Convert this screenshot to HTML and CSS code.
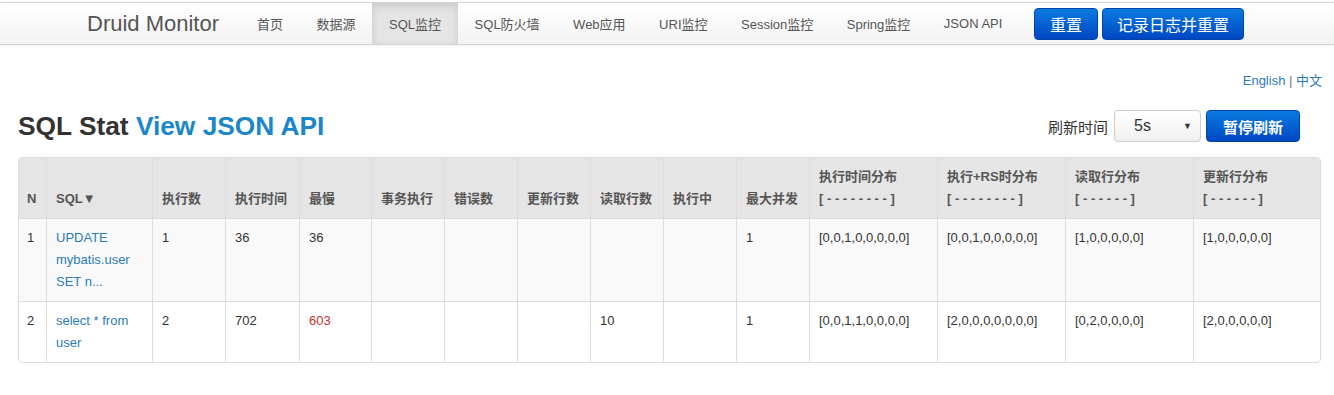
FILE: index.html
```html
<!DOCTYPE html>
<html lang="zh">

<head>
    <meta charset="UTF-8">
    <meta name="viewport" content="width=device-width, initial-scale=1.0">
    <title>Druid Stat Index</title>
    <link rel="stylesheet" href="styles.css">
</head>

<body>

    <div class="navbar">
        <div class="navbar-inner">
            <a class="brand" href="#">Druid Monitor</a>
            <ul class="nav">
                <li><a href="#">首页</a></li>
                <li><a href="#">数据源</a></li>
                <li class="active"><a href="#">SQL监控</a></li>
                <li><a href="#">SQL防火墙</a></li>
                <li><a href="#">Web应用</a></li>
                <li><a href="#">URI监控</a></li>
                <li><a href="#">Session监控</a></li>
                <li><a href="#">Spring监控</a></li>
                <li><a href="#">JSON API</a></li>
            </ul>
            <div class="nav-actions">
                <button class="btn-primary">重置</button>
                <button class="btn-primary btn-wide">记录日志并重置</button>
            </div>
        </div>
    </div>

    <div class="container">
        <div class="lang">
            <a href="#">English</a> | <a href="#">中文</a>
        </div>

        <div class="page-head">
            <h2>SQL Stat <a href="#">View JSON API</a></h2>
            <div class="refresh">
                <span class="refresh-label">刷新时间</span>
                <div class="select"><span>5s</span><span class="caret">▼</span></div>
                <button class="btn-primary btn-bold">暂停刷新</button>
            </div>
        </div>

        <table class="stat-table">
            <colgroup>
                <col style="width: 27px">
                <col style="width: 106px">
                <col style="width: 73px">
                <col style="width: 74px">
                <col style="width: 72px">
                <col style="width: 73px">
                <col style="width: 73px">
                <col style="width: 73px">
                <col style="width: 73px">
                <col style="width: 73px">
                <col style="width: 73px">
                <col style="width: 128px">
                <col style="width: 128px">
                <col style="width: 128px">
                <col style="width: 127px">
            </colgroup>
            <thead>
                <tr>
                    <th>N</th>
                    <th>SQL▼</th>
                    <th>执行数</th>
                    <th>执行时间</th>
                    <th>最慢</th>
                    <th>事务执行</th>
                    <th>错误数</th>
                    <th>更新行数</th>
                    <th>读取行数</th>
                    <th>执行中</th>
                    <th>最大并发</th>
                    <th>执行时间分布<br>[ - - - - - - - - ]</th>
                    <th>执行+RS时分布<br>[ - - - - - - - - ]</th>
                    <th>读取行分布<br>[ - - - - - - ]</th>
                    <th>更新行分布<br>[ - - - - - - ]</th>
                </tr>
            </thead>
            <tbody>
                <tr class="odd">
                    <td>1</td>
                    <td><a href="#">UPDATE mybatis.user SET n...</a></td>
                    <td>1</td>
                    <td>36</td>
                    <td>36</td>
                    <td></td>
                    <td></td>
                    <td></td>
                    <td></td>
                    <td></td>
                    <td>1</td>
                    <td>[0,0,1,0,0,0,0,0]</td>
                    <td>[0,0,1,0,0,0,0,0]</td>
                    <td>[1,0,0,0,0,0]</td>
                    <td>[1,0,0,0,0,0]</td>
                </tr>
                <tr>
                    <td>2</td>
                    <td><a href="#">select * from user</a></td>
                    <td>2</td>
                    <td>702</td>
                    <td class="slow">603</td>
                    <td></td>
                    <td></td>
                    <td></td>
                    <td>10</td>
                    <td></td>
                    <td>1</td>
                    <td>[0,0,1,1,0,0,0,0]</td>
                    <td>[2,0,0,0,0,0,0,0]</td>
                    <td>[0,2,0,0,0,0]</td>
                    <td>[2,0,0,0,0,0]</td>
                </tr>
            </tbody>
        </table>
    </div>

</body>

</html>
```

FILE: styles.css
```css
body {
    margin: 0;
    font-family: "Liberation Sans", "Noto Sans CJK SC", sans-serif;
    font-size: 13px;
    color: #333;
    background-color: #fff;
}

a {
    text-decoration: none;
}

/* barra superior */
.navbar {
    margin-top: 2px;
}

.navbar-inner {
    display: flex;
    align-items: stretch;
    height: 41px;
    padding-left: 87px;
    background-image: linear-gradient(#ffffff, #f2f2f2);
    border-top: 1px solid #d4d4d4;
    border-bottom: 1px solid #d4d4d4;
    box-shadow: 0 1px 4px rgba(0, 0, 0, 0.065);
}

.brand {
    display: flex;
    align-items: center;
    font-size: 22px;
    color: #555;
    margin-right: 21px;
}

.nav {
    display: flex;
    list-style: none;
    margin: 0;
    padding: 0;
}

.nav li a {
    display: flex;
    align-items: center;
    height: 100%;
    padding: 0 16.5px 0 17px;
    color: #555;
    font-size: 13px;
}

.nav li.active a {
    background-color: #e5e5e5;
    box-shadow: inset 0 3px 8px rgba(0, 0, 0, 0.125);
}

.nav-actions {
    display: flex;
    align-items: center;
    gap: 4px;
    margin-left: 15px;
}

.btn-primary {
    height: 32px;
    padding: 0 15px;
    font-family: inherit;
    font-size: 16px;
    color: #fff;
    background-image: linear-gradient(#0a7be0, #0047c2);
    border: 1px solid #0044aa;
    border-radius: 4px;
    cursor: pointer;
}

.btn-wide {
    padding: 0 14px;
}

.btn-bold {
    font-weight: bold;
    font-size: 15px;
    padding: 0 16px;
}

/* contenido */
.container {
    padding: 26px 12px 0 18px;
}

.lang {
    text-align: right;
    line-height: 20px;
    color: #777;
}

.lang a {
    color: #2c7bb6;
}

.page-head {
    display: flex;
    justify-content: space-between;
    align-items: center;
    margin-top: 19px;
    padding-right: 22px;
}

h2 {
    margin: 0;
    font-size: 26.3px;
    font-weight: bold;
    color: #333;
}

h2 a {
    color: #1a87c9;
}

.refresh {
    display: flex;
    align-items: center;
}

.refresh-label {
    font-size: 15px;
    margin-right: 6px;
}

.select {
    display: flex;
    justify-content: space-between;
    align-items: center;
    box-sizing: border-box;
    width: 87px;
    height: 32px;
    padding: 0 8px 0 19px;
    margin-right: 5px;
    font-size: 16px;
    border: 1px solid #ccc;
    border-radius: 4px;
    background-image: linear-gradient(#ffffff, #f0f0f0);
}

.caret {
    font-size: 9px;
}

/* tabla */
.stat-table {
    margin-top: 15px;
    width: 1303px;
    table-layout: fixed;
    border-collapse: separate;
    border-spacing: 0;
    border: 1px solid #ddd;
    border-radius: 4px;
    line-height: 22px;
}

.stat-table th,
.stat-table td {
    padding: 8px 8px 8px 9px;
    text-align: left;
    border-left: 1px solid #ddd;
    border-top: 1px solid #ddd;
    word-wrap: break-word;
}

.stat-table th:first-child,
.stat-table td:first-child {
    border-left: none;
    padding-left: 8px;
}

.stat-table thead th {
    border-top: none;
    background-color: #e5e5e5;
    color: #555;
    font-weight: bold;
    vertical-align: bottom;
}

.stat-table td {
    vertical-align: top;
}

.stat-table tr.odd td {
    background-color: #f9f9f9;
}

.stat-table td a {
    color: #2c7bb6;
}

.slow {
    color: #c9302c;
}
```
